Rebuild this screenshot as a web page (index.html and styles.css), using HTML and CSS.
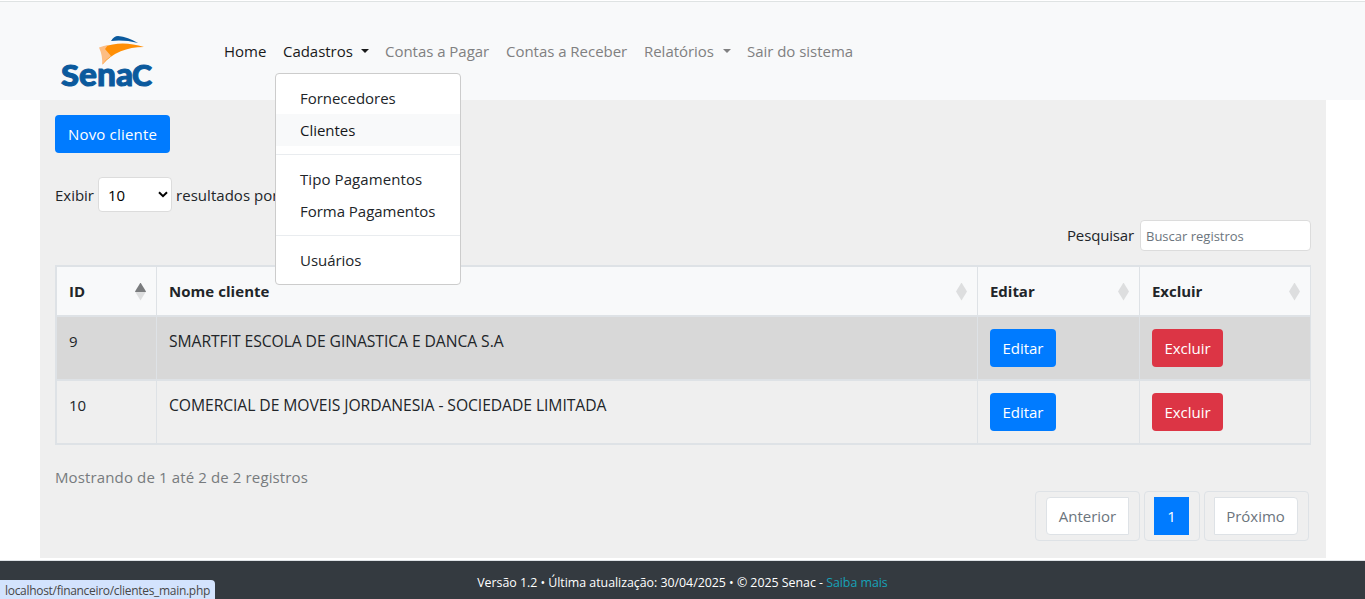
FILE: index.html
```html
<!DOCTYPE html>
<html lang="pt-BR">
<head>
<meta charset="utf-8">
<title>Clientes</title>
<link rel="stylesheet" href="styles.css">
</head>
<body>
<header class="navbar">
  <a class="brand" href="#">
    <svg class="logo" width="100" height="64" viewBox="0 0 100 64">
      <path d="M51 10Q54 5 58 5Q68 6 78 12Q64 8.500 51 10Z" fill="#0b5a9d"/>
      <path d="M43 16Q62 9 84 16Q58 16 43 33Q43 24 43 16Z" fill="#ff8f05"/>
      <path d="M39 16.500Q44 14.500 48 14L45 18L51 25Q45 29 42 34Q43 25 39 16.500Z" fill="#fdbd83"/>
      <text class="logo-text" y="55"><tspan x="1" font-size="28" textLength="18" lengthAdjust="spacingAndGlyphs">S</tspan><tspan x="19" font-size="33" textLength="54" lengthAdjust="spacingAndGlyphs">ena</tspan><tspan x="72" font-size="28" textLength="20" lengthAdjust="spacingAndGlyphs">C</tspan></text>
    </svg>
  </a>
  <nav class="nav">
    <a class="nav-item on home" href="#">Home</a>
    <div class="nav-item on cadastros">
      <span class="lbl">Cadastros</span><i class="caret"></i>
      <div class="menu">
        <a class="menu-item fornecedores" href="#">Fornecedores</a>
        <a class="menu-item hover clientes" href="#">Clientes</a>
        <div class="divider"></div>
        <a class="menu-item tipo" href="#">Tipo Pagamentos</a>
        <a class="menu-item forma" href="#">Forma Pagamentos</a>
        <div class="divider"></div>
        <a class="menu-item usuarios" href="#">Usuários</a>
      </div>
    </div>
    <a class="nav-item pagar" href="#">Contas a Pagar</a>
    <a class="nav-item receber" href="#">Contas a Receber</a>
    <a class="nav-item relatorios" href="#"><span class="lbl">Relatórios</span><i class="caret"></i></a>
    <a class="nav-item sair" href="#">Sair do sistema</a>
  </nav>
</header>
<main class="main">
  <button class="btn blue novo">Novo cliente</button>
  <div class="length">
    <span class="exibir">Exibir</span>
    <span class="select">10<svg width="10" height="7" viewBox="0 0 10 7"><path d="M1 1.200L5 5.200L9 1.200" fill="none" stroke="#000" stroke-width="2"/></svg></span>
    <span class="por">resultados por página</span>
  </div>
  <div class="search">
    <span class="pesquisar">Pesquisar</span>
    <input class="field" placeholder="Buscar registros">
  </div>
  <table class="table">
    <colgroup><col class="c1"><col class="c2"><col class="c3"><col class="c4"></colgroup>
    <thead>
      <tr>
        <th><div class="head"><span>ID</span><i class="sort asc"></i></div></th>
        <th><div class="head"><span class="h-nome">Nome cliente</span><i class="sort"></i></div></th>
        <th><div class="head"><span class="h-editar">Editar</span><i class="sort"></i></div></th>
        <th><div class="head"><span class="h-excluir">Excluir</span><i class="sort"></i></div></th>
      </tr>
    </thead>
    <tbody>
      <tr class="odd">
        <td>9</td><td><span class="client">SMARTFIT ESCOLA DE GINASTICA E DANCA S.A</span></td>
        <td><button class="btn blue editar">Editar</button></td>
        <td><button class="btn red excluir">Excluir</button></td>
      </tr>
      <tr>
        <td>10</td><td><span class="client">COMERCIAL DE MOVEIS JORDANESIA - SOCIEDADE LIMITADA</span></td>
        <td><button class="btn blue editar">Editar</button></td>
        <td><button class="btn red excluir">Excluir</button></td>
      </tr>
    </tbody>
  </table>
  <div class="info">Mostrando de 1 até 2 de 2 registros</div>
  <div class="pages">
    <div class="page"><a class="link prev" href="#">Anterior</a></div>
    <div class="page one"><a class="link current" href="#">1</a></div>
    <div class="page last"><a class="link next" href="#">Próximo</a></div>
  </div>
</main>
<footer class="footer"><span class="version">Versão 1.2 • Última atualização: 30/04/2025 • © 2025 Senac - <a class="more" href="#">Saiba mais</a></span></footer>
<div class="status">localhost/financeiro/clientes_main.php</div>
</body>
</html>
```
FILE: styles.css
```css
* { box-sizing: border-box; }
body {
  margin: 0;
  height: 599px;
  overflow: hidden;
  background: #fff;
  color: #212529;
  font: 15px/24px "Open Sans", "Noto Sans", sans-serif;
  letter-spacing: -0.03px;
  white-space: nowrap;
}
a { color: inherit; text-decoration: none; }

.navbar {
  display: flex;
  height: 100px;
  padding: 31px 0 0 60px;
  background: linear-gradient(#fff 1px, #dfe3e3 1px, #dfe3e3 2px, #f8f9fa 2px);
}
.brand { width: 164px; }
.logo { display: block; }
.logo-text { font-family: Lato, sans-serif; font-weight: 900; fill: #0b5a9d; stroke: #0b5a9d; stroke-width: 1px; letter-spacing: 0; }
.nav { display: flex; height: 42px; padding-top: 8px; color: #808081; }
.nav-item { display: flex; align-items: flex-start; height: 33px; }
.on { color: #191a1a; }
.home { width: 59px; }
.cadastros { position: relative; width: 102px; }
.pagar { width: 121px; }
.receber { width: 138px; }
.relatorios { width: 103px; }
.cadastros .lbl { width: 78px; }
.relatorios .lbl { width: 79px; }
.caret { margin-top: 10px; border: 4px solid transparent; border-top-color: currentColor; border-bottom: 0; }

.menu {
  position: absolute;
  z-index: 2;
  top: 34px;
  left: -8px;
  width: 186px;
  height: 212px;
  padding: 8px 0;
  border: 1px solid #ccc;
  border-radius: 4px;
  background: #fff;
  color: #212529;
}
.menu-item { display: block; height: 32px; padding: 4px 24px; }
.hover { background: #f8f9fa; color: #16181b; }
.divider { height: 1px; margin: 8px 0; background: #e9ecef; }
.tipo { letter-spacing: 0.08px; }

.main { width: 1286px; height: 458px; margin-left: 40px; padding: 15px; background: #efefef; }
.btn {
  display: block;
  height: 38px;
  padding: 0;
  border: 0;
  border-radius: 4px;
  color: #fff;
  font: inherit;
  letter-spacing: inherit;
}
.blue { background: #007bff; }
.red { background: #dc3545; }
.main .novo { width: 115px; letter-spacing: 0.18px; }
.main .editar { width: 66px; }
.main .excluir { width: 71px; }

.length { display: flex; align-items: center; height: 35px; margin-top: 24px; }
.exibir { width: 43px; }
.por { letter-spacing: 0.04px; }
.select {
  display: flex;
  align-items: center;
  justify-content: space-between;
  width: 74px;
  height: 35px;
  margin-right: 4px;
  padding: 0 3px 0 9px;
  border: 1px solid #dcdcdc;
  border-radius: 4px;
  background: #fff;
  color: #000;
}
.search { display: flex; justify-content: flex-end; align-items: center; height: 31px; margin-top: 8px; }
.pesquisar { width: 73px; padding-bottom: 2px; letter-spacing: -0.15px; }
.field {
  width: 171px;
  height: 31px;
  padding: 0 5px;
  border: 1px solid #dcdcdc;
  border-radius: 4px;
  background: #fff;
  font: 13px "Open Sans", "Noto Sans", sans-serif;
}
.field::placeholder { color: #6c757d; }

.table {
  width: 1256px;
  margin-top: 14px;
  table-layout: fixed;
  border-spacing: 0;
  border: solid #dee2e6;
  border-width: 2px 0 0 2px;
}
.c1 { width: 100px; }
.c2 { width: 821px; }
.c3 { width: 162px; }
.c4 { width: 171px; }
th, td { border: solid #dee2e6; border-width: 0 1px 2px 0; padding: 12px; text-align: left; vertical-align: top; }
th { height: 50px; padding-right: 10px; background: #f8f9fa; }
td { height: 64px; }
.odd { background: #d8d8d8; }
.client { display: block; height: 24px; font-size: 15.7px; letter-spacing: -0.07px; }
.h-nome { letter-spacing: 0.05px; }
.head { display: flex; justify-content: space-between; align-items: center; }
.sort { width: 11px; height: 18px; margin-top: 1px; background: #dddedf; clip-path: polygon(50% 0, 100% 50%, 50% 100%, 0 50%); }
.asc { background: linear-gradient(#7a7c7e 9px, #dddedf 9px); }

.info { margin-top: 20px; color: #777b7e; letter-spacing: 0.13px; }
.pages { display: flex; justify-content: flex-end; gap: 4px; margin: 2px 2px 0 0; }
.page { display: flex; justify-content: center; align-items: center; width: 105px; height: 50px; border: 1px solid #dee2e6; border-radius: 4px; }
.one { width: 56px; padding-right: 1px; }
.last { padding-right: 2px; }
.link { height: 38px; padding-top: 6px; border: 1px solid #dee2e6; background: #fff; color: #6c757d; text-align: center; }
.prev { width: 83px; border-radius: 4px 0 0 4px; }
.current { width: 35px; border-color: #007bff; background: #007bff; color: #fff; }
.next { width: 84px; border-radius: 0 4px 4px 0; }

.footer { height: 39px; margin-top: 2px; padding-top: 10px; border-top: 1px solid #dee2e6; background: #343a40; color: #fff; font-size: 12.4px; text-align: center; }
.more { color: #17a2b8; }
.status {
  position: absolute;
  left: 0;
  bottom: 0;
  width: 215px;
  height: 19px;
  padding-left: 5px;
  border-radius: 0 4px 0 0;
  background: #d3e3fd;
  color: #474747;
  font-size: 12px;
  line-height: 21px;
  letter-spacing: -0.3px;
}
```
